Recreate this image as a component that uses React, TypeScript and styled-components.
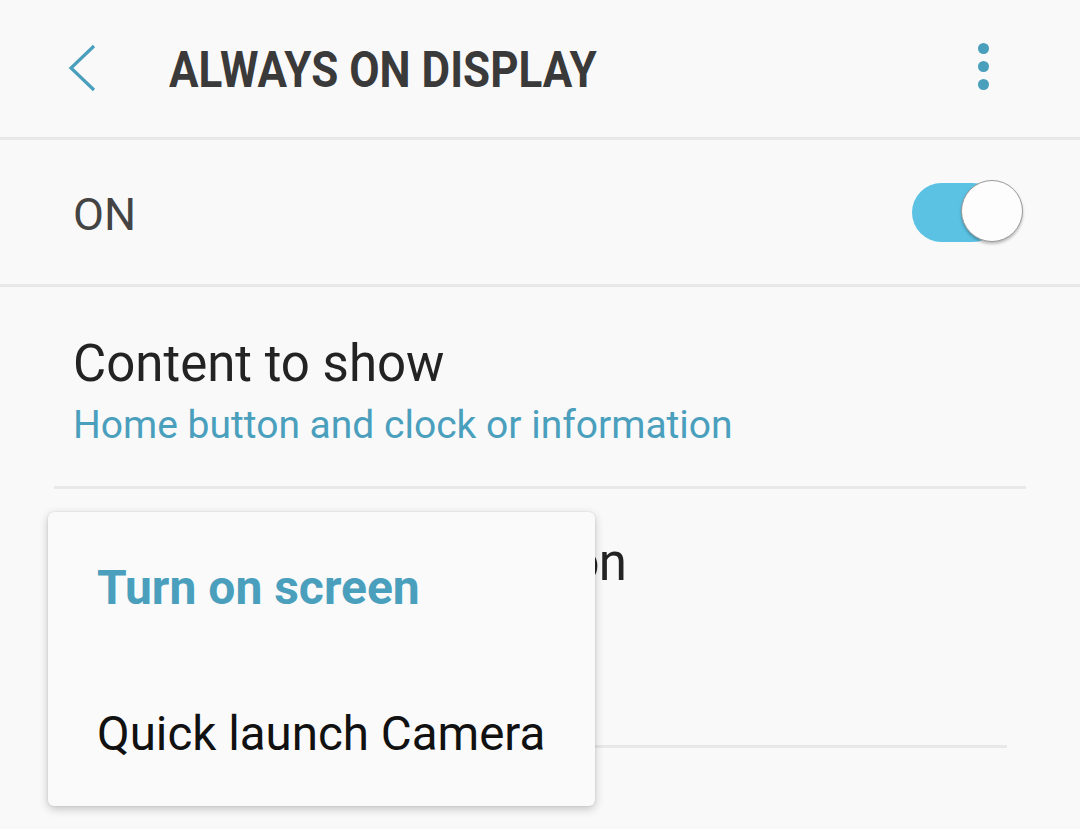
import styled, { createGlobalStyle } from "styled-components";

const GlobalStyle = createGlobalStyle`
  html, body {
    margin: 0;
    padding: 0;
    background: #f9f9f9;
  }
  body {
    font-family: Roboto, "Noto Sans", "Liberation Sans", sans-serif;
  }
`;

const ACCENT = "#4a9fbd";

export default function App() {
  return (
    <>
      <GlobalStyle />
      <Screen>
        <Header>
          <BackButton>
            <svg width="32" height="50" viewBox="0 0 32 50">
              <polyline
                points="28,3 5,25 28,47"
                fill="none"
                stroke={ACCENT}
                strokeWidth="3.2"
              />
            </svg>
          </BackButton>
          <Title>ALWAYS ON DISPLAY</Title>
          <MoreButton>
            <Dot />
            <Dot />
            <Dot />
          </MoreButton>
        </Header>
        <Divider />
        <SwitchRow>
          <SwitchLabel>ON</SwitchLabel>
          <Toggle>
            <Track />
            <Thumb />
          </Toggle>
        </SwitchRow>
        <Divider />
        <List>
          <Item>
            <ItemTitle>Content to show</ItemTitle>
            <ItemSub>Home button and clock or information</ItemSub>
          </Item>
          <InsetDivider $right={54} />
          <Item $tall>
            <ItemTitle $tight>Double tapping to turn on</ItemTitle>
          </Item>
          <InsetDivider $right={73} />
          <Menu>
            <MenuItem $selected>Turn on screen</MenuItem>
            <MenuItem>Quick launch Camera</MenuItem>
          </Menu>
        </List>
      </Screen>
    </>
  );
}

const Screen = styled.div`
  width: 1080px;
  height: 829px;
  overflow: hidden;
  background: #f9f9f9;
  display: flex;
  flex-direction: column;
`;

const Header = styled.div`
  height: 137px;
  display: flex;
  align-items: center;
  padding: 0 0 0 66px;
  box-sizing: border-box;
`;

const BackButton = styled.div`
  width: 103px;
  height: 50px;
  display: flex;
  align-items: center;
  margin-top: -2px;
`;

const Title = styled.div`
  font-family: Roboto, "Liberation Sans", sans-serif;
  font-weight: 700;
  font-size: 50px;
  line-height: 60px;
  color: #3a3a3a;
  transform: scaleX(0.88);
  transform-origin: left center;
  white-space: nowrap;
  flex: 1;
  margin-top: 3px;
`;

const MoreButton = styled.div`
  width: 12px;
  display: flex;
  flex-direction: column;
  gap: 7px;
  margin-right: 90px;
  margin-top: -5px;
`;

const Dot = styled.span`
  width: 11px;
  height: 11px;
  border-radius: 50%;
  background: ${ACCENT};
`;

const Divider = styled.div`
  height: 3px;
  background: #e8e8e8;
`;

const SwitchRow = styled.div`
  height: 144px;
  display: flex;
  align-items: center;
  justify-content: space-between;
  padding: 0 56px 0 73px;
`;

const SwitchLabel = styled.div`
  font-size: 45px;
  color: #444;
  margin-top: 4px;
`;

const Toggle = styled.div`
  width: 112px;
  height: 64px;
  display: flex;
  align-items: center;
  position: relative;
`;

const Track = styled.div`
  width: 90px;
  height: 59px;
  border-radius: 30px;
  background: #5bc2e4;
`;

const Thumb = styled.div`
  position: absolute;
  right: 1px;
  top: 0;
  width: 60px;
  height: 60px;
  border-radius: 50%;
  background: #fdfdfd;
  border: 1px solid #9a9a9a;
  box-shadow: 0 2px 3px rgba(0, 0, 0, 0.25);
`;

const List = styled.div`
  position: relative;
  display: flex;
  flex-direction: column;
`;

const Item = styled.div<{ $tall?: boolean }>`
  display: flex;
  flex-direction: column;
  gap: 8px;
  padding: ${(p) => (p.$tall ? "44px 73px 152px" : "47px 73px 38px")};
`;

const ItemTitle = styled.div<{ $tight?: boolean }>`
  font-size: 51px;
  line-height: 60px;
  color: #232323;
  white-space: nowrap;
  letter-spacing: ${(p) => (p.$tight ? "-0.8px" : "normal")};
`;

const ItemSub = styled.div`
  font-size: 39px;
  line-height: 46px;
  color: ${ACCENT};
  white-space: nowrap;
`;

const InsetDivider = styled.div<{ $right: number }>`
  height: 3px;
  background: #e8e8e8;
  margin: 0 ${(p) => p.$right}px 0 54px;
`;

const Menu = styled.div`
  position: absolute;
  left: 48px;
  top: 225px;
  width: 547px;
  height: 294px;
  box-sizing: border-box;
  border-radius: 6px;
  background: #fafafa;
  box-shadow: 0 3px 10px rgba(0, 0, 0, 0.22), 0 0 2px rgba(0, 0, 0, 0.12);
  display: flex;
  flex-direction: column;
  padding: 48px 0 0 49px;
  gap: 90px;
`;

const MenuItem = styled.div<{ $selected?: boolean }>`
  font-size: ${(p) => (p.$selected ? "48px" : "47.5px")};
  line-height: 56px;
  font-weight: ${(p) => (p.$selected ? 700 : 400)};
  color: ${(p) => (p.$selected ? ACCENT : "#111")};
  white-space: nowrap;
`;
